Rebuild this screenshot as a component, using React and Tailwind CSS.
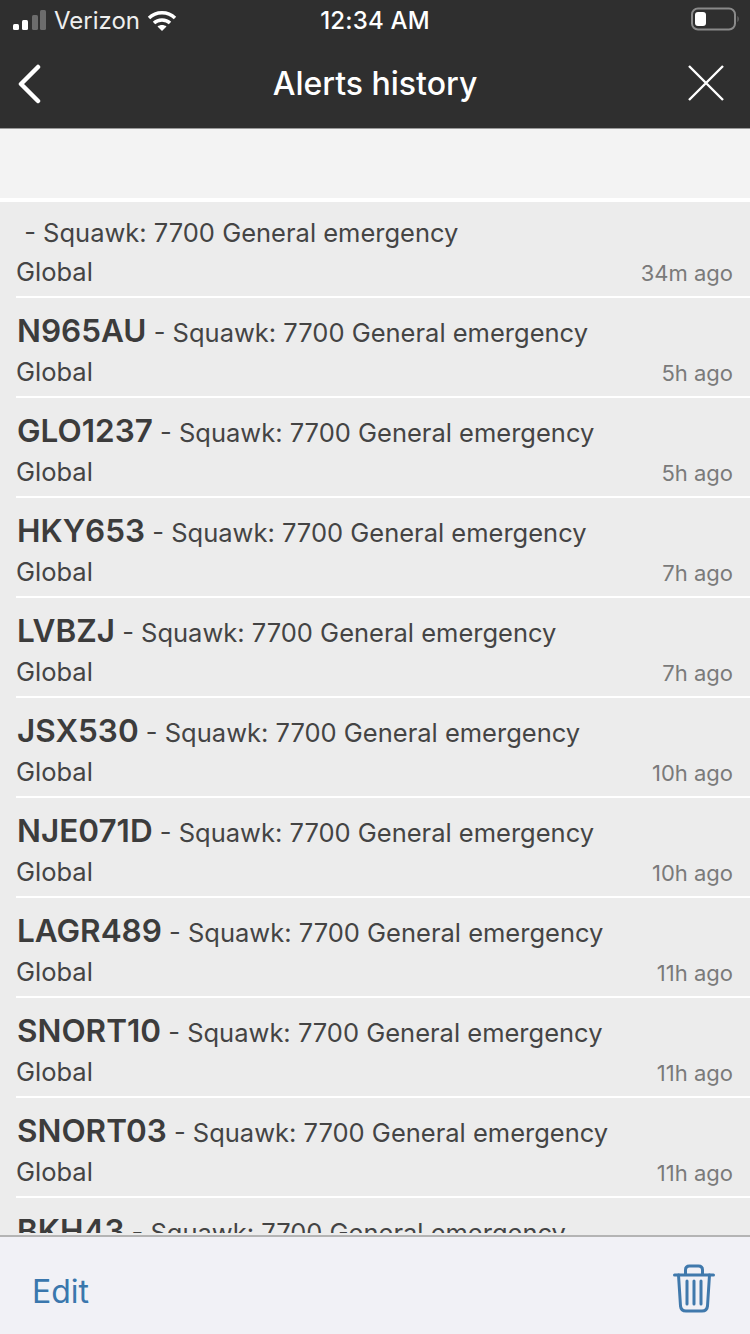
const rows = [
  ["", "34m ago"],
  ["N965AU", "5h ago"],
  ["GLO1237", "5h ago"],
  ["HKY653", "7h ago"],
  ["LVBZJ", "7h ago"],
  ["JSX530", "10h ago"],
  ["NJE071D", "10h ago"],
  ["LAGR489", "11h ago"],
  ["SNORT10", "11h ago"],
  ["SNORT03", "11h ago"],
  ["BKH43", null],
];

function Row({ code, time, first }) {
  return (
    <div className={(first ? "h-[96px]" : "h-[100px]") + " ml-4 shrink-0 flex flex-col border-b-[2px] border-white text-[#3c3c3c]"}>
      <div className={(first ? "h-[54px] pt-[9px]" : "h-[58px] pt-[11px]") + " flex items-baseline whitespace-nowrap"}>
        <span className="text-[31.5px] leading-[44px] font-semibold pl-px">{code}</span>
        <span className="text-[25.5px] leading-[44px] text-[#444]">&nbsp;- Squawk: 7700 General emergency</span>
      </div>
      {time && (
        <div className="flex items-baseline justify-between pr-[17px] h-[38px]">
          <span className="text-[25.5px] leading-[32px] text-[#444]">Global</span>
          <span className="text-[22px] leading-[32px] text-[#7a7a7a]">{time}</span>
        </div>
      )}
    </div>
  );
}

export default function App() {
  return (
    <div className="w-[750px] h-[1334px] flex flex-col overflow-hidden bg-white font-['Inter','Liberation_Sans',sans-serif]">
      <header className="h-[129px] shrink-0 bg-[#2f2f2f] border-b border-[#9a9a9a] text-white flex flex-col">
        <div className="h-[42px] flex items-center relative px-[13px]">
          <div className="flex items-center gap-[7px]">
            <svg width="34" height="22" viewBox="0 0 34 22">
              <rect x="0" y="14" width="6" height="6" rx="1.5" fill="#fff" />
              <rect x="9" y="10" width="6" height="10" rx="1.5" fill="#fff" />
              <rect x="19" y="5" width="6" height="15" rx="1.5" fill="#6c6c6c" />
              <rect x="27" y="0" width="6" height="20" rx="1.5" fill="#6c6c6c" />
            </svg>
            <span className="text-[24px] leading-none text-[#eeeeee]">Verizon</span>
            <svg width="30" height="22" viewBox="0 0 30 22" fill="none" stroke="#fff" strokeWidth="3.4">
              <path d="M2 8 C9 1 21 1 28 8" />
              <path d="M7 13 C11 9 19 9 23 13" />
              <path d="M10.5 16.5 L15 21 L19.5 16.5 C17 14.5 13 14.5 10.5 16.5Z" fill="#fff" stroke="none" />
            </svg>
          </div>
          <span className="absolute left-0 right-0 text-center text-[24px] leading-none font-medium tracking-[0.2px]">12:34 AM</span>
          <svg width="50" height="26" viewBox="0 0 50 26" className="absolute left-[690px] top-[7px]" fill="none">
            <rect x="2" y="1.5" width="43" height="21" rx="6" stroke="#8a8a8a" strokeWidth="2" />
            <rect x="5" y="5" width="11" height="14" rx="3" fill="#fff" />
            <path d="M47.5 9 C49 10 49 14 47.5 15Z" fill="#777" />
          </svg>
        </div>
        <div className="flex-1 flex items-center justify-between relative pl-[16px] pr-[25px] pb-[4px]">
          <svg width="28" height="42" viewBox="0 0 28 42" fill="none" stroke="#fff" strokeWidth="4.5" strokeLinecap="round" strokeLinejoin="round">
            <path d="M22 5 L5 22 L22 39" />
          </svg>
          <span className="absolute left-0 right-0 text-center text-[32px] leading-none font-medium pt-[1px]">Alerts history</span>
          <svg width="38" height="38" viewBox="0 0 38 38" fill="none" stroke="#fff" strokeWidth="2.4">
            <path d="M2 2 L36 36 M36 2 L2 36" />
          </svg>
        </div>
      </header>
      <div className="h-[69px] shrink-0 bg-[#f3f3f3]" />
      <div className="h-[4px] shrink-0 bg-white" />
      <main className="flex-1 min-h-0 overflow-hidden bg-[#ececec] flex flex-col">
        {rows.map((r, i) => (
          <Row key={i} code={r[0]} time={r[1]} first={i === 0} />
        ))}
      </main>
      <div className="h-[2px] shrink-0 bg-[#ececec]" />
      <footer className="h-[99px] shrink-0 bg-[#f1f1f6] border-t-[2px] border-[#b4b4b4] flex items-center justify-between pl-[32px] pr-[35px] text-[#3a77ad]">
        <span className="text-[32px] leading-none pt-[12px]">Edit</span>
        <svg width="42" height="50" viewBox="0 0 42 50" fill="none" stroke="#4079ac" strokeWidth="3" strokeLinecap="round" strokeLinejoin="round" className="mt-[6px]">
          <path d="M1.5 11 H40.5" />
          <path d="M12.5 10 V6 Q12.5 2 16.5 2 H25.5 Q29.5 2 29.5 6 V10" />
          <path d="M5.5 11 L7.5 42 Q8 47 13 47 H29 Q34 47 34.5 42 L36.5 11" />
          <path d="M14 17 V40 M21 17 V40 M28 17 V40" />
        </svg>
      </footer>
    </div>
  );
}
